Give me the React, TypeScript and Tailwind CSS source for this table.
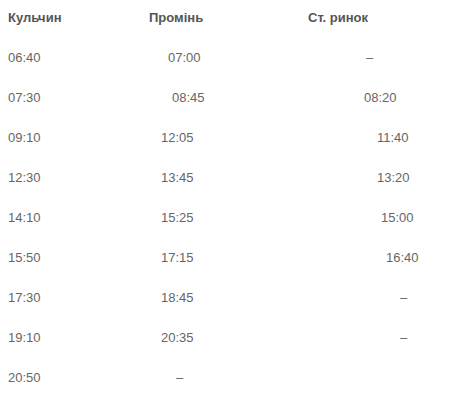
const header = ["Кульчин", "Промінь", "Ст. ринок"];

// [time, leftOffset] per column; offsets copy the uneven spacing of the source table
const rows: [string, string, string, string, string, string][] = [
  ["06:40", "ml-0", "07:00", "ml-[19px]", "–", "ml-[58px]"],
  ["07:30", "ml-0", "08:45", "ml-[23px]", "08:20", "ml-[56px]"],
  ["09:10", "ml-0", "12:05", "ml-[12px]", "11:40", "ml-[69px]"],
  ["12:30", "ml-0", "13:45", "ml-[12px]", "13:20", "ml-[69px]"],
  ["14:10", "ml-0", "15:25", "ml-[12px]", "15:00", "ml-[73px]"],
  ["15:50", "ml-0", "17:15", "ml-[12px]", "16:40", "ml-[78px]"],
  ["17:30", "ml-0", "18:45", "ml-[12px]", "–", "ml-[92px]"],
  ["19:10", "ml-0", "20:35", "ml-[12px]", "–", "ml-[92px]"],
  ["20:50", "ml-0", "–", "ml-[27px]", "", "ml-0"],
];

export default function App() {
  return (
    <div className="bg-white min-h-screen w-[471px] h-[407px] overflow-hidden font-['Liberation_Sans',Arial,sans-serif] text-[13px]">
      <div className="-mt-[2px] pl-[8px]">
        <div className="grid grid-cols-[141px_159px_1fr] h-[40px] items-center font-bold text-[#555]">
          {header.map((h) => (
            <div key={h}>{h}</div>
          ))}
        </div>
        {rows.map((r) => (
          <div
            key={r[0]}
            className="grid grid-cols-[141px_159px_1fr] h-[40px] items-center text-[#666]"
          >
            <div className={r[1]}>{r[0]}</div>
            <div className={r[3]}>{r[2]}</div>
            <div className={r[5]}>{r[4]}</div>
          </div>
        ))}
      </div>
    </div>
  );
}
